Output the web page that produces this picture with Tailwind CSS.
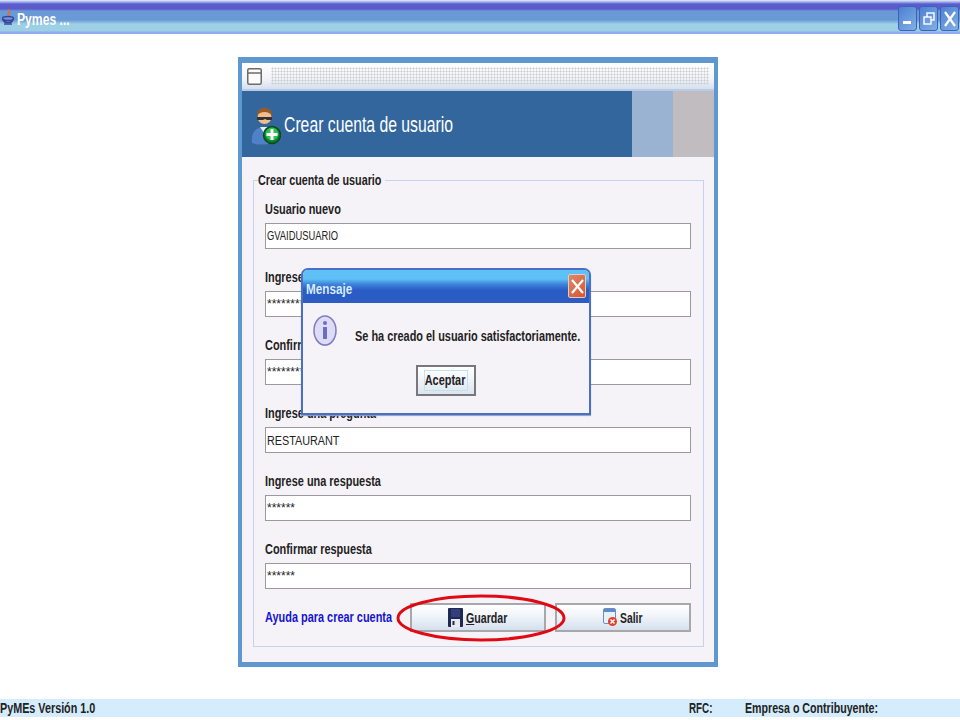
<!DOCTYPE html>
<html lang="es">
<head>
<meta charset="utf-8">
<title>Pymes</title>
<script src="https://cdn.jsdelivr.net/npm/@tailwindcss/browser@4"></script>
</head>
<body class="m-0 bg-white">
<div class="relative flex h-[720px] w-[960px] flex-col overflow-hidden bg-white font-['Liberation_Sans',sans-serif] text-[#222]">

  <!-- Title bar -->
  <header class="flex h-[34px] items-start justify-between bg-[linear-gradient(to_bottom,#e8ecfa_0,#9fb0ea_2px,#5b5ccb_4px,#5b5ccb_9px,#6a9ad6_11px,#6a9ad6_20px,#9dd0e4_24px,#9dd0e4_31px,#8eaaf0_32px,#8eaaf0_34px)]">
    <div class="flex items-start pl-[2px] pt-[8px]">
      <svg width="14" height="18" viewBox="0 0 14 18" class="shrink-0">
        <path d="M6 1c2 3-2 4 0 7 2-2 4-3 1-7z" fill="#e0703a"/>
        <ellipse cx="6" cy="10.500" rx="5.500" ry="2" fill="none" stroke="#3a3f9a" stroke-width="1.400"/>
        <path d="M1 11.500c1 4 9 4 10 0" fill="none" stroke="#3a3f9a" stroke-width="1.600"/>
        <path d="M2 16h8" stroke="#3a3f9a" stroke-width="1.400"/>
      </svg>
      <span class="ml-px mt-[3px] origin-left scale-x-[0.76] whitespace-nowrap text-[16px] font-bold leading-[18px] text-white">Pymes ...</span>
    </div>
    <div class="flex gap-[2px] pr-[1px] pt-[6px]">
      <div class="flex h-[25px] w-[19px] items-end justify-start rounded-[3px] border border-[#3c62b8] bg-[linear-gradient(135deg,#4f7fd2,#7fb1e4)] pb-[6px] pl-[4px]">
        <span class="h-[3px] w-[8px] bg-white"></span>
      </div>
      <div class="flex h-[25px] w-[19px] items-center justify-center rounded-[3px] border border-[#3c62b8] bg-[linear-gradient(135deg,#4f7fd2,#7fb1e4)]">
        <svg width="12" height="13" viewBox="0 0 12 13" fill="none" stroke="#fff" stroke-width="1.400"><rect x="4" y="1" width="7" height="7"/><rect x="1" y="5" width="7" height="7" fill="#6c9de0"/></svg>
      </div>
      <div class="flex h-[25px] w-[19px] items-center justify-center rounded-[3px] border border-[#3c62b8] bg-[linear-gradient(135deg,#4f7fd2,#7fb1e4)]">
        <svg width="14" height="16" viewBox="0 0 14 16" fill="none" stroke="#fff" stroke-width="2.200"><path d="M2 1l10 14M12 1L2 15"/></svg>
      </div>
    </div>
  </header>

  <!-- Main -->
  <main class="flex h-[633px] justify-center pr-[4px] pt-[23px]">
    <section class="flex h-[610px] w-[480px] flex-col border-b-[5px] border-l-4 border-r-4 border-t-[6px] border-[#5f97d0] bg-[#f6f3f8]">
      <div class="flex h-[28px] items-center gap-[9px] border-b-2 border-[#b8cce8] bg-[linear-gradient(to_bottom,#fff,#f4f4f8_60%,#d6dfee)] pl-[5px] pr-[5px]">
        <svg width="15" height="17" viewBox="0 0 15 17" class="shrink-0"><rect x="0.750" y="0.750" width="13.500" height="15.500" rx="1.500" fill="#fbfbfb" stroke="#6b6b6b" stroke-width="1.500"/><path d="M1 5h13" stroke="#6b6b6b" stroke-width="1.500"/></svg>
        <div class="h-[18px] flex-1 bg-[radial-gradient(#c6d0d4_45%,transparent_50%)] bg-[length:3px_3px]"></div>
      </div>
      <div class="flex h-[66px] items-center bg-[#33669c]">
        <div class="flex flex-1 items-center pl-2 pt-[1px]">
          <svg width="31" height="40" viewBox="0 0 31 40" class="mt-[6px] shrink-0">
            <path d="M2 35c-1-9 2-15 11-16 7 0 9 6 9 16-6 2-15 2-20 0z" fill="#4f80c8"/>
            <path d="M10 19l4 6 4-6z" fill="#e8eef6"/>
            <circle cx="14.500" cy="9" r="7" fill="#efbe8e"/>
            <path d="M7 8c0-6 3-8 7.500-8S22 2 22 8c-2-3-4-4-7.500-4S9 5 7 8z" fill="#9a5a20"/>
            <path d="M7 9h15v3h-5l-2-1-2 1H7z" fill="#333"/>
            <circle cx="22" cy="27" r="8.500" fill="#0b7a2c" stroke="#0a4a1c" stroke-width="1.400"/>
            <circle cx="22" cy="26" r="6.500" fill="#2cc04e"/>
            <path d="M22 21v11M16.500 26.500h11" stroke="#fff" stroke-width="3"/>
          </svg>
          <h1 class="ml-[3px] origin-left scale-x-[0.716] whitespace-nowrap text-[22px] font-normal leading-none text-white">Crear cuenta de usuario</h1>
        </div>
        <div class="h-full w-[41px] bg-[#9bb3d2]"></div>
        <div class="h-full w-[41px] bg-[#c0bcc0]"></div>
      </div>
      <div class="flex-1 pl-[11px] pr-[10px] pt-[16px]">
        <fieldset class="h-[474px] border border-[#c5d4ec] pl-[11px] pr-[12px] pt-[12px]">
          <legend class="ml-[-7px] h-[14px] w-[127px] text-[14px] font-bold leading-[14px]"><span class="block origin-left scale-x-[0.77] whitespace-nowrap">Crear cuenta de usuario</span></legend>
          <div class="flex flex-col gap-[18px]">
            <label class="flex flex-col">
              <span class="h-[24px] origin-left scale-x-[0.78] whitespace-nowrap text-[14px] font-bold leading-[20px]">Usuario nuevo</span>
              <span class="flex h-[26px] items-center border border-[#9a9a9a] bg-white pl-[1px] text-[12px]"><span class="origin-left scale-x-[0.78] whitespace-nowrap">GVAIDUSUARIO</span></span>
            </label>
            <label class="flex flex-col">
              <span class="h-[24px] origin-left scale-x-[0.78] whitespace-nowrap text-[14px] font-bold leading-[20px]">Ingrese contraseña</span>
              <span class="flex h-[26px] items-center border border-[#9a9a9a] bg-white pl-[1px] text-[12px]">********</span>
            </label>
            <label class="flex flex-col">
              <span class="h-[24px] origin-left scale-x-[0.78] whitespace-nowrap text-[14px] font-bold leading-[20px]">Confirmar contraseña</span>
              <span class="flex h-[26px] items-center border border-[#9a9a9a] bg-white pl-[1px] text-[12px]">********</span>
            </label>
            <label class="flex flex-col">
              <span class="h-[24px] origin-left scale-x-[0.78] whitespace-nowrap text-[14px] font-bold leading-[20px]">Ingrese una pregunta</span>
              <span class="flex h-[26px] items-center border border-[#9a9a9a] bg-white pl-[1px] pt-[2px] text-[12px]"><span class="origin-left scale-x-[0.9] whitespace-nowrap">RESTAURANT</span></span>
            </label>
            <label class="flex flex-col">
              <span class="h-[24px] origin-left scale-x-[0.78] whitespace-nowrap text-[14px] font-bold leading-[20px]">Ingrese una respuesta</span>
              <span class="flex h-[26px] items-center border border-[#9a9a9a] bg-white pl-[1px] text-[12px]">******</span>
            </label>
            <label class="flex flex-col">
              <span class="h-[24px] origin-left scale-x-[0.78] whitespace-nowrap text-[14px] font-bold leading-[20px]">Confirmar respuesta</span>
              <span class="flex h-[26px] items-center border border-[#9a9a9a] bg-white pl-[1px] text-[12px]">******</span>
            </label>
          </div>
          <div class="mt-[14px] flex h-[29px] items-center">
            <a class="w-[145px] origin-left scale-x-[0.78] whitespace-nowrap text-[14px] font-bold text-[#1414d0]">Ayuda para crear cuenta</a>
            <button class="flex h-full w-[136px] items-center justify-start border-2 border-[#a8a8ac] bg-[linear-gradient(to_bottom,#fff,#f2f5fa_40%,#d5e0ee)] pl-[36px] text-[14px] font-bold">
              <svg width="15" height="19" viewBox="0 0 15 19" class="shrink-0"><rect width="15" height="19" rx="1" fill="#1f2a52"/><rect x="3" y="1" width="9" height="8" fill="#33407a"/><rect x="3" y="11" width="9" height="8" fill="#e8e8ee"/><rect x="4.500" y="13" width="2" height="4" fill="#1f2a52"/></svg>
              <span class="ml-[3px] mt-[2px] origin-left scale-x-[0.76] whitespace-nowrap"><span class="underline">G</span>uardar</span>
            </button>
            <button class="ml-[9px] flex h-full w-[136px] items-center justify-start border-2 border-[#a8a8ac] bg-[linear-gradient(to_bottom,#fff,#f2f5fa_40%,#d5e0ee)] pl-[46px] text-[14px] font-bold">
              <svg width="14" height="19" viewBox="0 0 14 19" class="shrink-0"><rect x="0.500" y="0.500" width="12" height="15" rx="1.500" fill="#e8f0fa" stroke="#6d8fbe"/><rect x="1" y="1" width="11" height="3" fill="#5f8cc8"/><circle cx="9.500" cy="13.500" r="4.500" fill="#e0402c"/><path d="M7.500 11.500l4 4M11.500 11.500l-4 4" stroke="#fff" stroke-width="1.400"/></svg>
              <span class="ml-[3px] mt-[2px] origin-left scale-x-[0.74] whitespace-nowrap">Salir</span>
            </button>
          </div>
        </fieldset>
      </div>
    </section>
  </main>

  <!-- Footer -->
  <footer class="mt-[32px] flex h-[18px] items-center bg-[#d4ecfb] text-[14px] font-bold leading-none">
    <span class="w-[689px] origin-left scale-x-[0.77] whitespace-nowrap">PyMEs Versión 1.0</span>
    <span class="w-[56px] origin-left scale-x-[0.7] whitespace-nowrap">RFC:</span>
    <span class="origin-left scale-x-[0.76] whitespace-nowrap">Empresa o Contribuyente:</span>
  </footer>

  <!-- Red highlight -->
  <svg class="absolute left-[396px] top-[594px]" width="170" height="48" viewBox="0 0 170 48"><ellipse cx="85" cy="24" rx="83" ry="22" fill="none" stroke="#e00a14" stroke-width="3"/></svg>

  <!-- Dialog -->
  <div role="dialog" class="absolute left-[301px] top-[268px] flex h-[147px] w-[290px] flex-col rounded-t-[7px] border-2 border-[#4a70c4] bg-[#f6f3f8] shadow-[0_1px_1px_#8a9cc8]">
    <div class="flex h-[33px] items-end justify-between rounded-t-[5px] bg-[linear-gradient(to_bottom,#5ec0f4_0,#5ec0f4_9px,#3f86dc_14px,#2a5cc4_20px,#2c5cc4_100%)] pb-[5px] pl-[3px] pr-[3px]">
      <span class="mb-[2px] origin-left scale-x-[0.78] whitespace-nowrap text-[15px] font-bold leading-none text-[#d8ecff]">Mensaje</span>
      <span class="flex h-[24px] w-[18px] items-center justify-center rounded-[2px] border border-[#d8d0d0] bg-[linear-gradient(135deg,#d88a6a,#e0522c)]">
        <svg width="13" height="15" viewBox="0 0 13 15" fill="none" stroke="#fff" stroke-width="2.200"><path d="M1 1l11 13M12 1L1 14"/></svg>
      </span>
    </div>
    <div class="flex items-start pl-[10px] pt-[12px]">
      <svg width="24" height="32" viewBox="0 0 24 32" class="shrink-0"><ellipse cx="12" cy="17" rx="11" ry="14" fill="#b8b6d8"/><ellipse cx="12" cy="15.500" rx="11" ry="14.500" fill="#dedcf4" stroke="#7d7cc4" stroke-width="1.500"/><rect x="10" y="12" width="4" height="12" fill="#6c6cc0"/><circle cx="12" cy="8" r="2" fill="#6c6cc0"/></svg>
      <p class="ml-[18px] mt-[14px] origin-left scale-x-[0.78] whitespace-nowrap text-[14px] font-bold leading-none">Se ha creado el usuario satisfactoriamente.</p>
    </div>
    <div class="flex justify-center pr-[1px] pt-[18px]">
      <button class="flex h-[31px] w-[60px] items-center justify-center border-2 border-[#77777c] bg-[linear-gradient(to_bottom,#fff,#f2f5fa_40%,#dbe5f0)] text-[14px] font-bold">
        <span class="flex h-[21px] w-[44px] items-center justify-center border border-[#c4e0ea]"><span class="scale-x-[0.78] whitespace-nowrap">Aceptar</span></span>
      </button>
    </div>
  </div>
</div>
</body>
</html>
